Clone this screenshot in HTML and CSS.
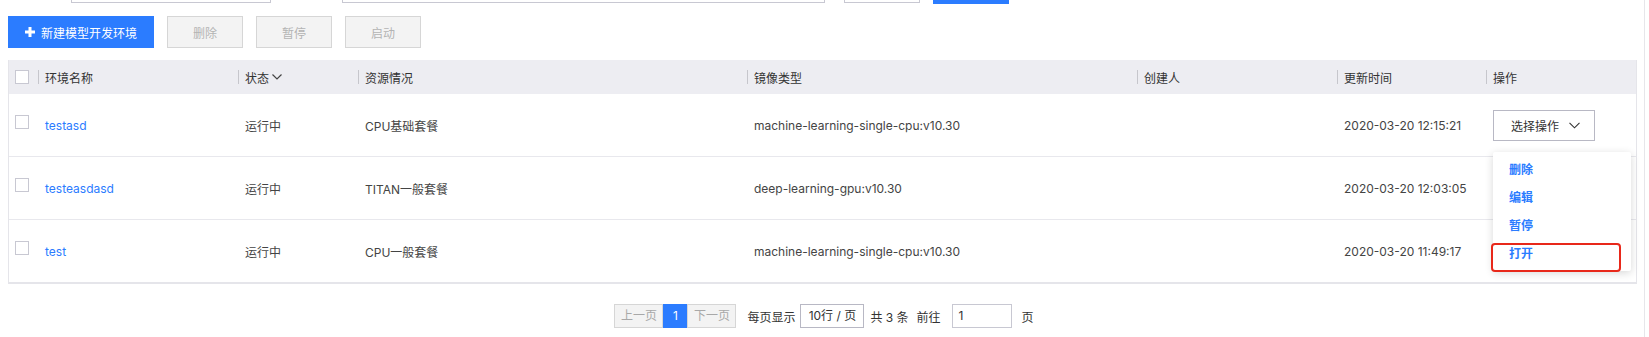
FILE: index.html
```html
<!DOCTYPE html>
<html lang="zh-CN">

<head>
    <meta charset="UTF-8">
    <meta name="viewport" content="width=device-width, initial-scale=1.0">
    <title>模型开发环境</title>
    <link rel="stylesheet" href="styles.css">
</head>

<body>
    <div class="page">
        <div class="filter-bar">
            <div class="filter-input f-name"></div>
            <div class="filter-input f-image"></div>
            <div class="filter-input f-status"></div>
            <div class="filter-btn"></div>
        </div>

        <div class="toolbar">
            <button class="btn btn-primary">
                <svg class="plus" width="10" height="10" viewBox="0 0 10 10"><path d="M3.5 0h3v3.5H10v3H6.5V10h-3V6.5H0v-3h3.5z" fill="#fff"/></svg>
                新建模型开发环境
            </button>
            <button class="btn btn-disabled">删除</button>
            <button class="btn btn-disabled">暂停</button>
            <button class="btn btn-disabled">启动</button>
        </div>

        <div class="table">
            <div class="row head">
                <div class="cell cell-check"><span class="checkbox"></span></div>
                <div class="cell"><span class="th">环境名称</span></div>
                <div class="cell"><span class="th">状态
                    <svg class="caret" width="10" height="6" viewBox="0 0 10 6"><path d="M0.5 0.5L5 5L9.5 0.5" fill="none" stroke="#444" stroke-width="1.2"/></svg>
                </span></div>
                <div class="cell"><span class="th">资源情况</span></div>
                <div class="cell"><span class="th">镜像类型</span></div>
                <div class="cell"><span class="th">创建人</span></div>
                <div class="cell"><span class="th">更新时间</span></div>
                <div class="cell"><span class="th">操作</span></div>
            </div>

            <div class="row">
                <div class="cell cell-check"><span class="checkbox"></span></div>
                <div class="cell"><a class="link" href="#">testasd</a></div>
                <div class="cell">运行中</div>
                <div class="cell">CPU基础套餐</div>
                <div class="cell">machine-learning-single-cpu:v10.30</div>
                <div class="cell"></div>
                <div class="cell">2020-03-20 12:15:21</div>
                <div class="cell cell-action">
                    <div class="select-wrap">
                        <button class="select-btn">选择操作
                            <svg width="11" height="7" viewBox="0 0 11 7"><path d="M0.5 0.8L5.5 5.8L10.5 0.8" fill="none" stroke="#333" stroke-width="1.1"/></svg>
                        </button>
                        <ul class="menu">
                            <li class="menu-item">删除</li>
                            <li class="menu-item">编辑</li>
                            <li class="menu-item">暂停</li>
                            <li class="menu-item marked">打开</li>
                        </ul>
                    </div>
                </div>
            </div>

            <div class="row">
                <div class="cell cell-check"><span class="checkbox"></span></div>
                <div class="cell"><a class="link" href="#">testeasdasd</a></div>
                <div class="cell">运行中</div>
                <div class="cell">TITAN一般套餐</div>
                <div class="cell">deep-learning-gpu:v10.30</div>
                <div class="cell"></div>
                <div class="cell">2020-03-20 12:03:05</div>
                <div class="cell"></div>
            </div>

            <div class="row last">
                <div class="cell cell-check"><span class="checkbox"></span></div>
                <div class="cell"><a class="link" href="#">test</a></div>
                <div class="cell">运行中</div>
                <div class="cell">CPU一般套餐</div>
                <div class="cell">machine-learning-single-cpu:v10.30</div>
                <div class="cell"></div>
                <div class="cell">2020-03-20 11:49:17</div>
                <div class="cell"></div>
            </div>
        </div>

        <div class="pager">
            <div class="pages">
                <span class="page-btn disabled">上一页</span>
                <span class="page-btn current">1</span>
                <span class="page-btn disabled">下一页</span>
            </div>
            <span class="pager-text">每页显示</span>
            <span class="size-select">10行 / 页</span>
            <span class="pager-text total">共 3 条</span>
            <span class="pager-text goto">前往</span>
            <span class="page-input">1</span>
            <span class="pager-text unit">页</span>
        </div>
    </div>
</body>

</html>
```

FILE: styles.css
```css
* {
    margin: 0;
    padding: 0;
    box-sizing: border-box;
}

body {
    font-family: 'Inter', 'Noto Sans CJK SC', sans-serif;
    font-size: 12px;
    color: #444;
    background: white;
}

.page {
    width: 1645px;
    min-height: 337px;
    padding-left: 8px;
    border-right: 1px solid #e6e6ea;
}

/* Filter row is scrolled up, only its bottom edge shows */
.filter-bar {
    height: 4px;
    overflow: hidden;
    display: flex;
    align-items: flex-end;
}

.filter-input {
    height: 30px;
    margin-bottom: 1px;
    border: 1px solid #c8c8d2;
    background: white;
    flex-shrink: 0;
}

.f-name {
    width: 200px;
    margin-left: 63px;
}

.f-image {
    width: 483px;
    margin-left: 71px;
}

.f-status {
    width: 76px;
    margin-left: 19px;
}

.filter-btn {
    width: 76px;
    height: 30px;
    margin-left: 13px;
    background: #2b7cff;
    flex-shrink: 0;
}

.toolbar {
    display: flex;
    gap: 13px;
    margin-top: 12px;
}

.btn {
    height: 32px;
    font-family: inherit;
    font-size: 12px;
    border: 1px solid #d6d6d6;
    display: flex;
    align-items: center;
    justify-content: center;
}

.btn-primary {
    width: 146px;
    gap: 6px;
    background: #2b7cff;
    border-color: #2b7cff;
    color: white;
}

.btn-disabled {
    width: 76px;
    background: #f3f3f3;
    color: #b3b3b3;
}

.table {
    width: 1629px;
    margin-top: 12px;
    border-left: 1px solid #e5e5ea;
    border-right: 1px solid #e5e5ea;
}

.row {
    display: grid;
    grid-template-columns: 29px 200px 120px 389px 390px 200px 149px 1fr;
    height: 63px;
    border-bottom: 1px solid #e8e8ed;
    background: white;
}

.row.last {
    height: 64px;
    border-bottom: 2px solid #e5e5ea;
}

.row.head {
    height: 34px;
    background: #ededf2;
    border-bottom: none;
    color: #333;
}

.cell {
    display: flex;
    align-items: center;
    padding-left: 7px;
    white-space: nowrap;
}

.head .cell {
    padding-left: 0;
}

.th {
    display: flex;
    align-items: center;
    gap: 3px;
    height: 14px;
    border-left: 1px solid #c6c6cc;
    padding-left: 6px;
}

.cell-check {
    padding-left: 6px;
    align-items: flex-start;
    padding-top: 21px;
}

.head .cell-check {
    padding-left: 6px;
    padding-top: 0;
    align-items: center;
}

.checkbox {
    display: block;
    width: 14px;
    height: 14px;
    border: 1px solid #c8c8d2;
    background: white;
}

.link {
    color: #2b7cff;
    text-decoration: none;
}

.cell-action {
    position: relative;
}

.select-wrap {
    position: relative;
}

.select-btn {
    width: 102px;
    height: 31px;
    padding-left: 17px;
    display: flex;
    align-items: center;
    gap: 10px;
    font-family: inherit;
    font-size: 12px;
    color: #333;
    background: white;
    border: 1px solid #b8b8c4;
}

.menu {
    position: absolute;
    top: 42px;
    left: 0;
    z-index: 2;
    width: 138px;
    padding: 4px 0 3px;
    list-style: none;
    background: white;
    border-radius: 2px;
    box-shadow: 0 2px 8px rgba(0, 0, 0, 0.16);
}

.menu-item {
    position: relative;
    height: 28px;
    line-height: 28px;
    padding-left: 16px;
    color: #2b7cff;
    font-weight: bold;
}

/* red annotation frame round the "open" item */
.menu-item.marked::after {
    content: '';
    position: absolute;
    left: -2px;
    top: 3px;
    width: 126px;
    height: 25px;
    border: 2px solid #e8281a;
    border-radius: 4px;
}

.pager {
    display: flex;
    align-items: center;
    justify-content: center;
    margin-top: 20px;
    padding-right: 4px;
    color: #333;
}

.pages {
    display: flex;
}

.page-btn {
    height: 24px;
    line-height: 22px;
    text-align: center;
    border: 1px solid #d6d6d6;
}

.page-btn.disabled {
    width: 49px;
    background: #f3f3f3;
    color: #a8a8a8;
}

.page-btn.current {
    width: 24px;
    background: #2b7cff;
    border-color: #2b7cff;
    color: white;
}

.pager-text {
    margin-left: 11px;
}

.size-select {
    width: 64px;
    height: 24px;
    line-height: 22px;
    margin-left: 5px;
    text-align: center;
    border: 1px solid #b8b8c4;
}

.pager-text.total {
    margin-left: 6px;
}

.pager-text.goto {
    margin-left: 8px;
}

.page-input {
    width: 60px;
    height: 24px;
    line-height: 22px;
    margin-left: 11px;
    padding-left: 6px;
    border: 1px solid #c8c8d2;
}

.pager-text.unit {
    margin-left: 10px;
}
```
